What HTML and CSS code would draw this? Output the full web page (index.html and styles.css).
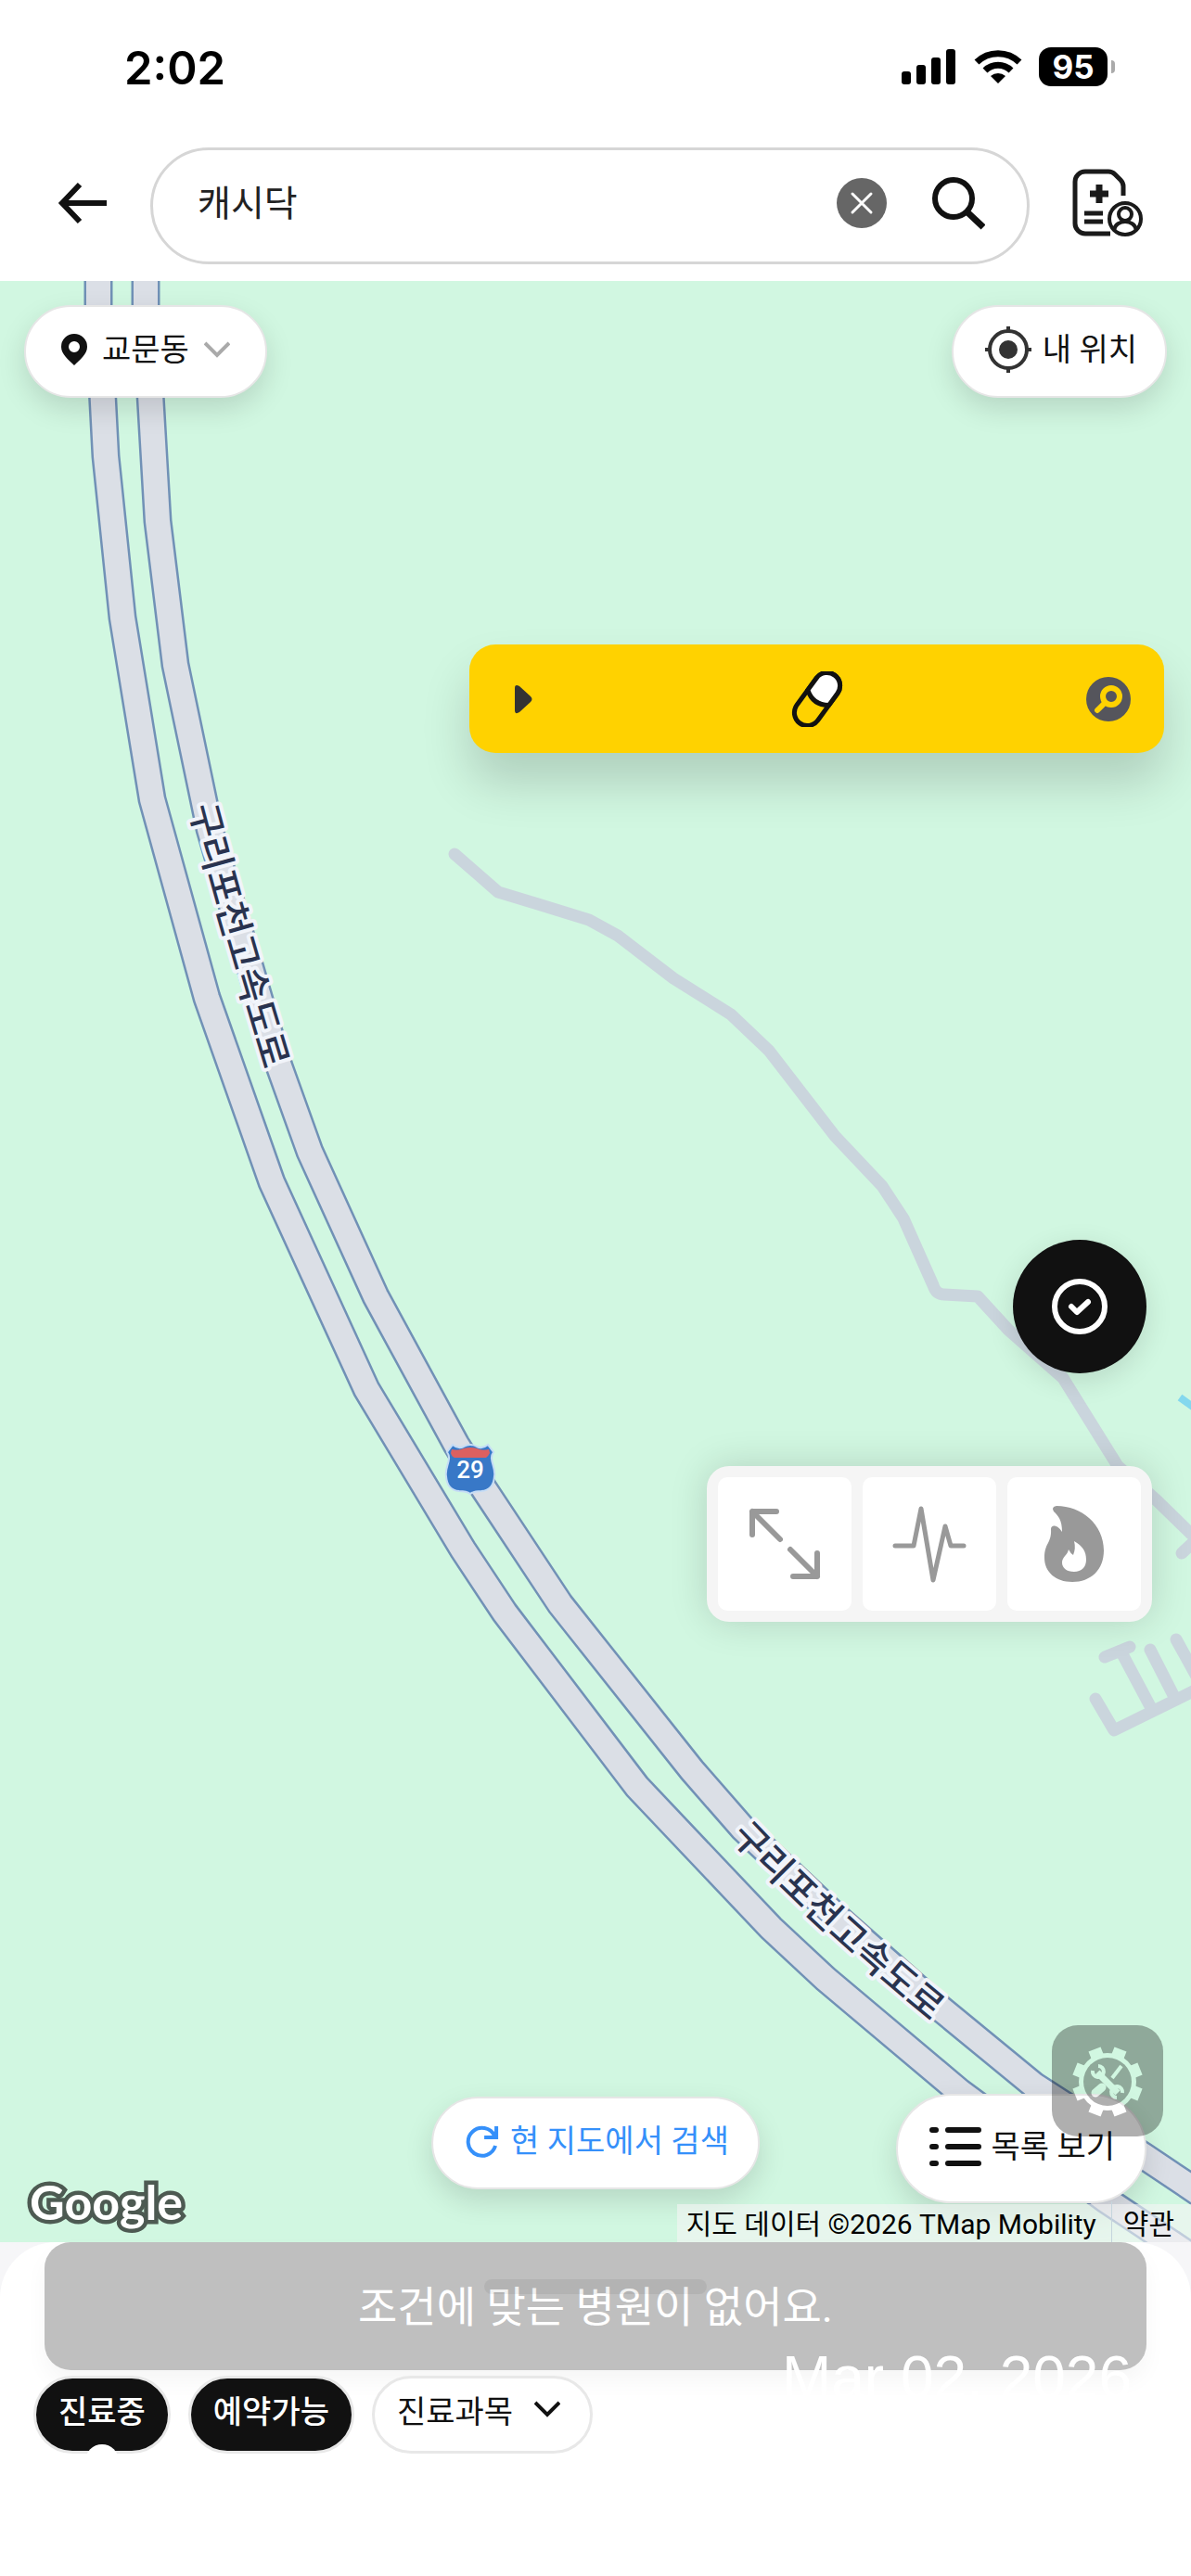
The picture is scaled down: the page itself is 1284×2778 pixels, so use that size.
FILE: index.html
```html
<!DOCTYPE html>
<html lang="ko">
  <head>
    <meta charset="UTF-8" />
    <meta name="viewport" content="width=device-width, initial-scale=1.0" />
    <title>병원 찾기</title>
    <link rel="stylesheet" href="styles.css">
  </head>
  <body>
    <div class="status-bar">
      <span class="time">2:02</span>
      <div class="status-icons">
        <svg width="60" height="38" viewBox="0 0 60 38">
          <rect x="0" y="24" width="10" height="14" rx="3" />
          <rect x="16" y="17" width="10" height="21" rx="3" />
          <rect x="32" y="9" width="10" height="29" rx="3" />
          <rect x="48" y="0" width="10" height="38" rx="3" />
        </svg>
        <svg width="52" height="38" viewBox="0 0 52 38">
          <g fill="none" stroke="#000" stroke-width="7">
            <path d="M3 14a33 33 0 0 1 46 0" />
            <path d="M12 23a20 20 0 0 1 28 0" />
          </g>
          <path d="M26 37l-8-8a12 12 0 0 1 16 0z" />
        </svg>
        <div class="battery">95</div>
      </div>
    </div>

    <header class="header">
      <button class="icon-button" aria-label="뒤로">
        <svg width="54" height="46" viewBox="0 0 54 46" fill="none" stroke="#111" stroke-width="6">
          <path d="M24 3L5 23l19 20M5 23h48" />
        </svg>
      </button>
      <form class="search">
        <input type="text" value="캐시닥" aria-label="검색어" />
        <button type="reset" aria-label="지우기">
          <svg width="54" height="54" viewBox="0 0 54 54">
            <circle cx="27" cy="27" r="27" fill="#666" />
            <path d="M17 17l20 20M37 17L17 37" stroke="#fff" stroke-width="3" stroke-linecap="round" />
          </svg>
        </button>
        <button type="button" aria-label="검색">
          <svg width="58" height="58" viewBox="0 0 58 58" fill="none" stroke="#111" stroke-width="6">
            <circle cx="24" cy="24" r="20" />
            <path d="M38 38l18 17" stroke-width="7" />
          </svg>
        </button>
      </form>
      <button class="icon-button" aria-label="내 진료 기록">
        <svg width="78" height="74" viewBox="0 0 78 74" fill="none" stroke="#1a1a1a" stroke-width="5">
          <path d="M41 70H14a11 11 0 0 1-11-11V14a11 11 0 0 1 11-11h25q4 0 7 3l6 6q3 3 3 7v10" />
          <path d="M29 17v20M19 27h20" stroke-width="7" />
          <path d="M13 48h20M13 57h20" />
          <circle cx="57" cy="54" r="17" stroke-width="4" />
          <circle cx="57" cy="49" r="7" stroke-width="4" />
          <path d="M45 66c2-12 22-12 24 0" stroke-width="4" />
        </svg>
      </button>
    </header>

    <main class="map">
      <svg class="map-canvas" viewBox="0 303 1284 2115" preserveAspectRatio="xMidYMin slice">
        <g class="trail">
          <path d="M490 921L537 962L580 975L635 992L666 1009L726 1055L788 1094L829 1133L900 1225L951 1279L974 1314L1006 1386Q1009 1396 1018 1396L1054 1398L1087 1434L1146 1486L1205 1581L1247 1618L1284 1654M1274 1675L1290 1660" />
          <path d="M1181 1832L1201 1866L1290 1822M1191 1787L1218 1776M1208 1780L1241 1842M1240 1779L1266 1830M1268 1768L1290 1808" />
        </g>
        <path class="stream" d="M1272 1507L1290 1520" />
        <g class="road-edge">
          <path d="M106 290V340L114 492L132 666L164 862L223 1076L293 1275L395 1498L499 1671L544 1739L687 1927L831 2079L890 2134L1035 2256L1192 2372L1300 2444" />
          <path d="M157 290V340L170 562L189 717L226 894L301 1150L334 1242L405 1398L492 1558L522 1606L604 1730L746 1909L801 1972L905 2070L1014 2166L1115 2249L1233 2325L1300 2370" />
        </g>
        <g class="road">
          <path d="M106 290V340L114 492L132 666L164 862L223 1076L293 1275L395 1498L499 1671L544 1739L687 1927L831 2079L890 2134L1035 2256L1192 2372L1300 2444" />
          <path d="M157 290V340L170 562L189 717L226 894L301 1150L334 1242L405 1398L492 1558L522 1606L604 1730L746 1909L801 1972L905 2070L1014 2166L1115 2249L1233 2325L1300 2370" />
        </g>
        <path id="label-north" fill="none" d="M204 871Q239 1005 296 1190" />
        <path id="label-south" fill="none" d="M787 1981Q890 2091 1040 2210" />
        <text class="road-name"><textPath href="#label-north">구리포천고속도로</textPath></text>
        <text class="road-name"><textPath href="#label-south">구리포천고속도로</textPath></text>
        <path d="M488 1558q6 5 12 2q7-4 14 0q6 3 12-2l6 8c-6 8 3 16 1 26q-1 15-14 16q-8 0-12 3q-4-3-12-3q-13-1-14-16c-2-10 7-18 1-26z" fill="#3878c7" stroke="#c5dcf5" stroke-width="2" />
        <path d="M487 1563q7 2 13-1q7-2 14 0q6 3 13 1l1 4q-2 4-4 5h-34q-3-1-4-5z" fill="#dc6060" />
        <text class="shield" x="507" y="1594">29</text>
      </svg>

      <div class="map-row">
        <button class="pill">
          <svg width="28" height="34" viewBox="0 0 28 34">
            <path d="M14 0a14 14 0 0 0-14 14c0 8 8 14 14 20c6-6 14-12 14-20a14 14 0 0 0-14-14zm0 8a6 6 0 1 1 0 12a6 6 0 0 1 0-12z" fill="#111" />
          </svg>
          <span>교문동</span>
          <svg width="28" height="18" viewBox="0 0 28 18" fill="none" stroke="#aaa" stroke-width="4">
            <path d="M1 2l13 13L27 2" />
          </svg>
        </button>
        <button class="pill location">
          <svg width="50" height="50" viewBox="0 0 50 50" fill="none" stroke="#333" stroke-width="4">
            <circle cx="25" cy="25" r="20" />
            <circle cx="25" cy="25" r="10" fill="#333" stroke="none" />
            <path d="M25 0v6M25 44v6M0 25h6M44 25h6" />
          </svg>
          <span>내 위치</span>
        </button>
      </div>

      <button class="banner" aria-label="약국 찾기">
        <svg width="48" height="48" viewBox="0 0 48 48">
          <path d="M13 12q0-5 5-2l12 11q3 3 0 6L18 38q-5 3-5-2z" fill="#333" />
        </svg>
        <svg width="56" height="60" viewBox="0 0 56 60" stroke="#111" stroke-width="5">
          <g transform="rotate(36 28 30)">
            <rect x="14" y="-2" width="28" height="64" rx="14" fill="none" />
            <path d="M14 28V12a14 14 0 0 1 28 0v16q-14 10-28 0z" fill="#fff" />
          </g>
        </svg>
        <svg width="48" height="48" viewBox="0 0 48 48">
          <circle cx="24" cy="24" r="24" fill="#55555c" />
          <circle cx="27" cy="21" r="9" fill="none" stroke="#ffd200" stroke-width="6" />
          <path d="M20 28l-8 8" stroke="#ffd200" stroke-width="6" stroke-linecap="round" />
        </svg>
      </button>

      <button class="check-button" aria-label="확인">
        <svg width="60" height="60" viewBox="0 0 60 60" fill="none" stroke="#fff" stroke-linecap="round" stroke-linejoin="round">
          <circle cx="30" cy="30" r="27" stroke-width="6" />
          <path d="M21 30l6 6l12-11" stroke-width="6" />
        </svg>
      </button>

      <div class="toolbar">
        <button aria-label="확대">
          <svg width="80" height="80" viewBox="0 0 80 80" fill="none" stroke="#999" stroke-width="6" stroke-linecap="round" stroke-linejoin="round">
            <path d="M5 30V5h26M5 5l30 30M75 50v25H49M75 75L46 46" />
          </svg>
        </button>
        <button aria-label="활동">
          <svg width="80" height="84" viewBox="0 0 80 84" fill="none" stroke="#999" stroke-width="5" stroke-linecap="round" stroke-linejoin="round">
            <path d="M3 44h20l8-40l13 77l13-58l6 21h14" />
          </svg>
        </button>
        <button aria-label="인기">
          <svg width="64" height="82" viewBox="0 0 64 82">
            <path d="M13 0C40 0 64 20 64 48C64 69 50 82 30 82C12 82 0 71 0 56C0 40 8 40 7 25C7 20 14 20 19 28C19 15 15 11 10 6Q7 1 13 0zM32 38Q34 46 31 53Q28 51 26 47C25 53 19 55 19 61C19 67 24 71 32 71C40 71 45 66 45 58C45 49 41 43 32 38z" fill="#999" fill-rule="evenodd" />
          </svg>
        </button>
      </div>

      <button class="pill refresh">
        <svg width="36" height="36" viewBox="0 0 36 36" fill="none" stroke="#3590fa" stroke-width="4">
          <path d="M31 12A15 15 0 1 0 32 23M33 2v12H20" />
        </svg>
        <span>현 지도에서 검색</span>
      </button>
      <button class="pill list-view">
        <svg width="56" height="42" viewBox="0 0 56 42" stroke="#111" stroke-width="6" stroke-linecap="round">
          <path d="M3 3h4M20 3h33M3 21h4M20 21h33M3 39h4M20 39h33" />
        </svg>
        <span>목록 보기</span>
      </button>
      <button class="tools" aria-label="도구">
        <svg width="120" height="120" viewBox="0 0 120 120">
          <mask id="gear">
            <rect width="120" height="120" fill="#fff" />
            <circle cx="60" cy="61" r="31" />
            <g stroke="#000" stroke-width="14">
              <path d="M60 61L74 26M60 61L95 47M60 61L95 75M60 61L74 96M60 61L46 96M60 61L25 75M60 61L25 47M60 61L46 26" />
            </g>
            <circle cx="60" cy="61" r="26" fill="#fff" />
            <path d="M49 51l22 22" stroke="#000" stroke-width="7" />
            <path d="M44 49a6 6 0 1 0 6-5M76 73a6 6 0 1 0-6 5" fill="none" stroke="#000" stroke-width="4" />
            <path d="M75 44l-10 13" stroke="#000" stroke-width="4" />
            <path d="M54 67l-7 6" stroke="#000" stroke-width="9" stroke-linecap="round" />
          </mask>
          <rect width="120" height="120" rx="28" mask="url(#gear)" />
        </svg>
      </button>

      <div class="map-footer">
        <span class="google">Google</span>
        <div class="attribution">
          <span>지도 데이터 ©2026 TMap Mobility</span>
          <a href="#terms">약관</a>
        </div>
      </div>
    </main>

    <section class="sheet">
      <div class="toast" role="status">
        <div class="handle"></div>
        조건에 맞는 병원이 없어요.
        <time class="stamp">Mar 02, 2026</time>
      </div>
      <div class="filters">
        <button class="chip active">진료중</button>
        <button class="chip active">예약가능</button>
        <button class="chip">
          진료과목
          <svg width="28" height="18" viewBox="0 0 28 18" fill="none" stroke="#111" stroke-width="4">
            <path d="M1 2l13 13L27 2" />
          </svg>
        </button>
        <span class="dot"></span>
      </div>
    </section>
  </body>
</html>
```

FILE: styles.css
```css
* {
  box-sizing: border-box;
}
body {
  margin: 0;
  min-height: 100vh;
  display: flex;
  flex-direction: column;
  background-color: #fff;
  color: #111;
  font-family: Roboto, "Noto Sans CJK KR", sans-serif;
  font-size: 34px;
}
button {
  display: flex;
  align-items: center;
  justify-content: center;
  padding: 0;
  border: none;
  background: none;
  color: inherit;
  font: inherit;
  cursor: pointer;
}
svg {
  flex: none;
}
.status-bar {
  display: flex;
  justify-content: space-between;
  align-items: center;
  height: 144px;
  padding: 0 80px 0 134px;
}
.time {
  padding-top: 2px;
  font-family: Inter, sans-serif;
  font-size: 49px;
  font-weight: 600;
  color: #000;
}
.status-icons {
  display: flex;
  align-items: center;
  gap: 18px;
}
.battery {
  position: relative;
  width: 74px;
  height: 42px;
  margin-right: 10px;
  border-radius: 13px;
  background-color: #000;
  color: #fff;
  font-family: Inter, sans-serif;
  font-size: 35px;
  font-weight: 700;
  line-height: 42px;
  text-align: center;
}
.battery::after {
  content: "";
  position: absolute;
  top: 14px;
  right: -8px;
  width: 4px;
  height: 14px;
  border-radius: 0 4px 4px 0;
  background-color: #aaa;
}
.header {
  display: flex;
  align-items: center;
  padding: 15px 50px 18px 62px;
}
.search {
  flex: 1;
  display: flex;
  align-items: center;
  gap: 48px;
  height: 126px;
  margin: 0 46px 0 46px;
  padding: 0 45px 6px 48px;
  border: 3px solid #d6d6d6;
  border-radius: 63px;
}
.search input {
  flex: 1;
  min-width: 0;
  padding: 0 0 6px;
  border: none;
  outline: none;
  background: none;
  color: #222;
  font: inherit;
  font-size: 39px;
}
.header .icon-button {
  padding-bottom: 6px;
}
.map {
  position: relative;
  flex: 1;
  display: flex;
  flex-direction: column;
  justify-content: space-between;
  overflow: hidden;
  background-color: #d1f7e1;
}
.map-canvas {
  position: absolute;
  inset: 0;
  width: 100%;
  height: 100%;
}
.trail {
  fill: none;
  stroke: #cad5dd;
  stroke-width: 13px;
  stroke-linecap: round;
  stroke-linejoin: round;
}
.stream {
  stroke: #84d8ee;
  stroke-width: 8px;
}
.road-edge {
  fill: none;
  stroke: #7191b6;
  stroke-width: 31px;
}
.road {
  fill: none;
  stroke: #dbdfe6;
  stroke-width: 26px;
}
.road-name {
  fill: #29334f;
  stroke: #f1f4fa;
  stroke-width: 8px;
  stroke-linejoin: round;
  paint-order: stroke;
  font-size: 40px;
  font-weight: 500;
}
.shield {
  fill: #fff;
  font-size: 26px;
  font-weight: 500;
  text-anchor: middle;
}
.map-row {
  position: relative;
  display: flex;
  justify-content: space-between;
  padding: 26px;
}
.pill {
  height: 100px;
  padding: 0 38px 4px;
  gap: 16px;
  border: 2px solid #e6e6e6;
  border-radius: 50px;
  background-color: #fff;
  box-shadow: 0 12px 30px rgba(0, 0, 0, 0.13);
}
.pill span {
  padding-bottom: 6px;
}
.location {
  gap: 12px;
  padding: 0 30px 4px 34px;
}
.banner {
  position: absolute;
  top: 392px;
  right: 29px;
  width: 749px;
  max-width: 90%;
  height: 117px;
  padding: 0 36px;
  justify-content: space-between;
  border-radius: 28px;
  background-color: #ffd200;
  box-shadow: 0 32px 52px rgba(0, 0, 0, 0.16);
}
.check-button {
  position: absolute;
  right: 48px;
  bottom: 937px;
  width: 144px;
  height: 144px;
  border-radius: 50%;
  background-color: #111;
  box-shadow: 0 8px 30px rgba(0, 0, 0, 0.12);
}
.toolbar {
  position: absolute;
  right: 42px;
  bottom: 669px;
  display: flex;
  gap: 12px;
  padding: 12px;
  border-radius: 24px;
  background-color: #f5f5f5;
  box-shadow: 0 0 40px rgba(0, 0, 0, 0.15);
}
.toolbar button {
  width: 144px;
  height: 144px;
  border-radius: 10px;
  background-color: #fff;
}
.refresh {
  position: absolute;
  bottom: 57px;
  left: 50%;
  transform: translateX(-50%);
  gap: 12px;
  padding: 0 31px 4px 35px;
  color: #3590fa;
  white-space: nowrap;
}
.list-view {
  position: absolute;
  right: 48px;
  bottom: 42px;
  height: 118px;
  padding: 0 32px 4px 34px;
  gap: 10px;
  border-radius: 59px;
}
.tools {
  position: absolute;
  right: 30px;
  bottom: 114px;
  opacity: 0.31;
}
.map-footer {
  display: flex;
  justify-content: space-between;
  align-items: flex-end;
}
.google {
  position: relative;
  padding: 0 0 12px 32px;
  color: #fff;
  font-family: Lato, sans-serif;
  font-size: 52px;
  font-weight: 700;
  line-height: 64px;
  -webkit-text-stroke: 9px #4d5a52;
  paint-order: stroke fill;
}
.attribution {
  position: relative;
  display: flex;
  align-items: center;
  height: 41px;
  padding: 0 18px 4px 10px;
  background-color: rgba(245, 245, 245, 0.6);
  color: #000;
  font-size: 30px;
}
.attribution a {
  margin-left: 16px;
  padding-left: 12px;
  border-left: 1px solid #c5d5dd;
  color: inherit;
  text-decoration: none;
}
.sheet {
  min-height: 360px;
  padding: 0 36px;
  border-radius: 60px 60px 0 0;
  background-color: #fff;
  box-shadow: 0 -30px 0 30px #f6f6f8;
}
.toast {
  position: relative;
  display: flex;
  align-items: center;
  justify-content: center;
  height: 138px;
  margin: 0 12px;
  padding-bottom: 6px;
  border-radius: 28px;
  background-color: #bfbfbf;
  box-shadow: 0 12px 24px rgba(0, 0, 0, 0.04);
  color: #fff;
  font-size: 46px;
}
.handle {
  position: absolute;
  top: 40px;
  left: 50%;
  width: 240px;
  height: 16px;
  margin-left: -120px;
  border-radius: 8px;
  background-color: rgba(0, 0, 0, 0.06);
}
.stamp {
  position: absolute;
  top: 110px;
  right: 16px;
  font-family: "Liberation Sans", sans-serif;
  font-size: 64px;
  line-height: 72px;
}
.filters {
  position: relative;
  display: flex;
  gap: 19px;
  padding-top: 6px;
}
.chip {
  height: 84px;
  gap: 23px;
  padding: 0 32px 12px 24px;
  border: 3px solid #e8e8e8;
  border-radius: 42px;
  background-color: #fff;
}
.chip.active {
  padding: 0 24px 12px;
  background-color: #111;
  color: #fff;
  font-weight: 500;
}
.dot {
  position: absolute;
  left: 56px;
  bottom: -26px;
  width: 36px;
  height: 36px;
  border-radius: 50%;
  background-color: #fff;
}
```
